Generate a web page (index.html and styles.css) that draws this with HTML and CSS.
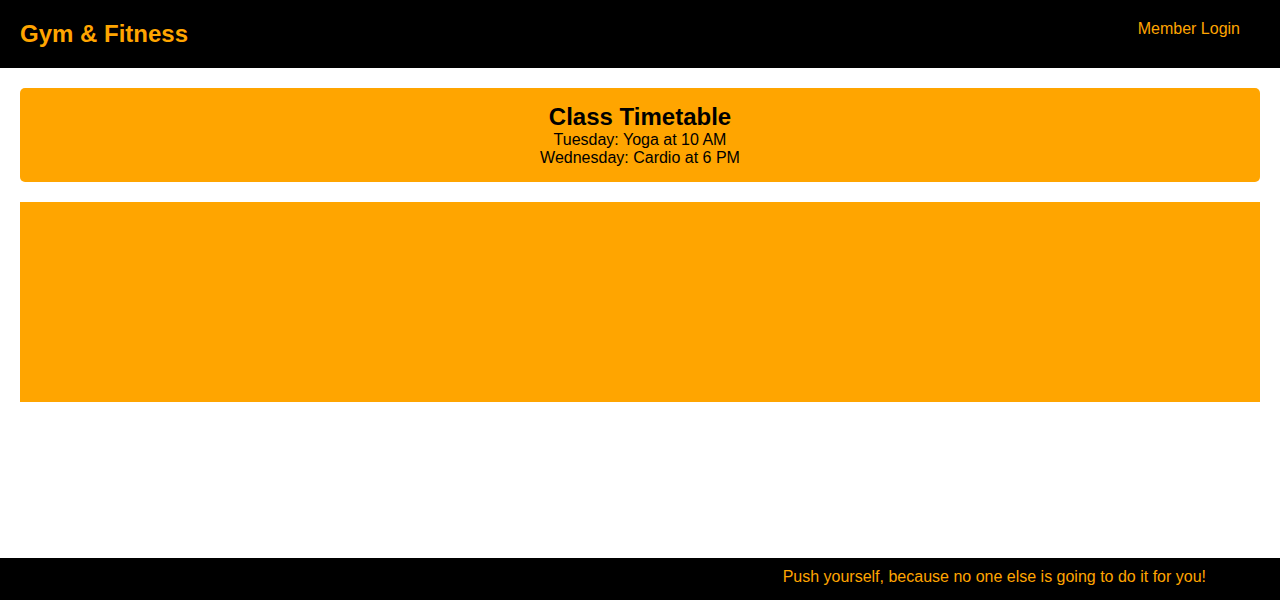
FILE: index.html
```html
<!DOCTYPE html>
<html lang="en">
<head>
<meta charset="utf-8">
<title>Gym &amp; Fitness</title>
<link rel="stylesheet" href="styles.css">
</head>
<body>
<header class="site-header">
  <h1 class="brand">Gym &amp; Fitness</h1>
  <nav class="nav"><a class="nav-link" href="#">Member Login</a></nav>
</header>
<main class="main">
  <section class="timetable">
    <h2 class="timetable-title">Class Timetable</h2>
    <p class="timetable-item">Tuesday: Yoga at 10 AM</p>
    <p class="timetable-item">Wednesday: Cardio at 6 PM</p>
  </section>
  <section class="banner"></section>
</main>
<footer class="site-footer">
  <p class="quote">Push yourself, because no one else is going to do it for you!</p>
</footer>
</body>
</html>
```
FILE: styles.css
```css
* { box-sizing: border-box; }
html, body { height: 100%; }
body {
  margin: 0;
  font-family: "Liberation Sans", Arial, sans-serif;
  font-size: 16px;
  line-height: 18px;
  color: #000;
  background: #fff;
  display: flex;
  flex-direction: column;
}
.site-header {
  background: #000;
  height: 68px;
  padding: 20px 40px 20px 20px;
  display: flex;
  justify-content: space-between;
  align-items: flex-start;
}
.brand {
  margin: 0;
  font-size: 24px;
  line-height: 28px;
  font-weight: bold;
  color: #ffa500;
}
.nav-link {
  color: #ffa500;
  text-decoration: none;
  font-size: 16px;
  line-height: 18px;
}
.main {
  flex: 1;
  padding: 20px;
  display: flex;
  flex-direction: column;
  gap: 20px;
}
.timetable {
  background: #ffa500;
  border-radius: 5px;
  padding: 15px;
  text-align: center;
}
.timetable-title {
  margin: 0;
  font-size: 24px;
  line-height: 28px;
  font-weight: bold;
}
.timetable-item {
  margin: 0;
}
.banner {
  background: #ffa500;
  height: 200px;
}
.site-footer {
  background: #000;
  height: 42px;
  padding: 10px 74px 10px 20px;
  display: flex;
  justify-content: flex-end;
  align-items: center;
}
.quote {
  margin: 0;
  color: #ffa500;
  line-height: 18px;
  transform: translateY(-2px);
}
```
